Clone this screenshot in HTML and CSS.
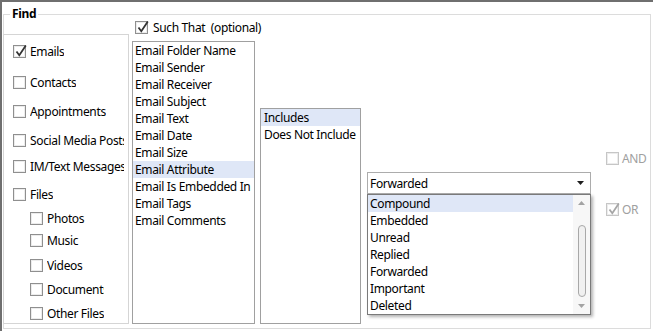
FILE: index.html
```html
<!DOCTYPE html>
<html lang="en">
<head>
    <meta charset="UTF-8">
    <title>Find</title>
    <link rel="stylesheet" href="styles.css">
</head>
<body>
    <div class="window">
        <div class="group">
            <span class="group-title">Find</span>
            <div class="find-row">
                <div class="types">
                    <label class="type"><span class="cb"><svg viewBox="0 0 13 13"><path d="M2.5 6.5 L5.3 10.3 L11.8 0.5"/></svg></span><span class="type-name">Emails</span></label>
                    <label class="type"><span class="cb"></span><span class="type-name">Contacts</span></label>
                    <label class="type"><span class="cb"></span><span class="type-name">Appointments</span></label>
                    <label class="type"><span class="cb"></span><span class="type-name">Social Media Posts</span></label>
                    <label class="type"><span class="cb"></span><span class="type-name">IM/Text Messages</span></label>
                    <label class="type"><span class="cb"></span><span class="type-name">Files</span></label>
                    <label class="type sub"><span class="cb"></span><span class="type-name">Photos</span></label>
                    <label class="type sub"><span class="cb"></span><span class="type-name">Music</span></label>
                    <label class="type sub"><span class="cb"></span><span class="type-name">Videos</span></label>
                    <label class="type sub"><span class="cb"></span><span class="type-name">Documents</span></label>
                    <label class="type sub"><span class="cb"></span><span class="type-name">Other Files</span></label>
                </div>

                <div class="attr-col">
                    <label class="such-that"><span class="cb"><svg viewBox="0 0 13 13"><path d="M2.5 6.5 L5.3 10.3 L11.8 0.5"/></svg></span>Such That&nbsp; (optional)</label>
                    <ul class="list attr-list">
                        <li>Email Folder Name</li>
                        <li>Email Sender</li>
                        <li>Email Receiver</li>
                        <li>Email Subject</li>
                        <li>Email Text</li>
                        <li>Email Date</li>
                        <li>Email Size</li>
                        <li class="selected">Email Attribute</li>
                        <li>Email Is Embedded In</li>
                        <li>Email Tags</li>
                        <li>Email Comments</li>
                    </ul>
                </div>

                <ul class="list op-list">
                    <li class="selected">Includes</li>
                    <li>Does Not Include</li>
                </ul>

                <div class="value-col">
                    <div class="combo">
                        <span>Forwarded</span>
                        <svg class="combo-arrow" viewBox="0 0 7 4"><path d="M0 0 H7 L3.5 4 Z"/></svg>
                        <div class="dropdown">
                            <ul class="options">
                                <li class="selected">Compound</li>
                                <li>Embedded</li>
                                <li>Unread</li>
                                <li>Replied</li>
                                <li>Forwarded</li>
                                <li>Important</li>
                                <li>Deleted</li>
                            </ul>
                            <div class="scrollbar">
                                <svg class="scroll-arrow" viewBox="0 0 7 4"><path d="M0 4 H7 L3.5 0 Z"/></svg>
                                <div class="thumb"></div>
                                <svg class="scroll-arrow" viewBox="0 0 7 4"><path d="M0 0 H7 L3.5 4 Z"/></svg>
                            </div>
                        </div>
                    </div>
                </div>

                <div class="logic-col">
                    <label class="logic"><span class="cb"></span>AND</label>
                    <label class="logic or"><span class="cb"><svg viewBox="0 0 13 13"><path d="M2.5 6.5 L5.3 10.3 L11.8 0.5"/></svg></span>OR</label>
                </div>
            </div>
        </div>
    </div>
</body>
</html>
```

FILE: styles.css
```css
body { margin: 0; font-family: "Noto Sans", "Open Sans", sans-serif; font-size: 12px; letter-spacing: -0.35px; color: #000; background: #fff; }
.window {
    width: 653px;
    height: 331px;
    box-sizing: border-box;
    border-top: 2px solid #6f6f6f;
    border-left: 2px solid #6f6f6f;
    padding: 12px 0 0 1px;
    overflow: hidden;
}
.group {
    position: relative;
    width: 648px;
    height: 315px;
    box-sizing: border-box;
    border: 1px solid #dcdcdc;
}
.group-title {
    position: absolute;
    top: -8px;
    left: 6px;
    padding: 0 2px;
    background: #fff;
    font-weight: bold;
    line-height: 14px;
}
.find-row {
    display: flex;
    align-items: flex-end;
    height: 100%;
    box-sizing: border-box;
    padding-bottom: 4px;
}

/* checkboxes */
.cb {
    flex: none;
    position: relative;
    width: 13px;
    height: 13px;
    box-sizing: border-box;
    border: 1px solid #8f8f8f;
    background: #fff;
    box-shadow: inset 0 0 0 1px #ececec;
    margin-right: 4px;
}
.cb svg { position: absolute; left: 0; top: -1px; width: 13px; height: 13px; overflow: visible; }
.cb path { fill: none; stroke: #333; stroke-width: 1.8; }

/* left panel */
.types {
    margin-left: -1px;
    width: 126px;
    height: 290px;
    box-sizing: border-box;
    border: 1px solid #d5d5d5;
    padding: 9px 0 0 9px;
    display: grid;
    grid-template-rows: 31px 29px 29px 26px 28px 24px 22px 25px 24px 24px auto;
    overflow: hidden;
}
.type { display: flex; align-items: center; height: 15px; white-space: nowrap; }
.type-name { max-width: 94px; overflow: hidden; }
.type.sub { padding-left: 17px; }
.type.sub .type-name { width: 57px; }

/* lists */
.attr-col { align-self: stretch; display: flex; flex-direction: column; margin-left: 3px; width: 123px; }
.such-that { display: flex; align-items: center; margin: 6px 0 0 3px; height: 13px; white-space: nowrap; }
.such-that .cb { margin-right: 5px; }
.list { list-style: none; margin: 0; padding: 0; border: 1px solid #a0a0a0; box-sizing: border-box; background: #fff; }
.list li { height: 17px; line-height: 17px; padding-left: 2px; white-space: nowrap; overflow: hidden; }
.list li.selected, .options li.selected { background: #dfe7f7; }
.attr-list { margin-top: auto; width: 123px; height: 283px; }
.op-list { margin-left: 5px; width: 101px; height: 216px; }
.op-list li { padding-left: 3px; }

/* combo */
.value-col { align-self: flex-start; margin: 157px 0 0 6px; width: 224px; }
.combo {
    position: relative;
    display: flex;
    align-items: center;
    height: 22px;
    box-sizing: border-box;
    border: 1px solid #acacac;
    padding-left: 2px;
}
.combo-arrow { margin-left: auto; margin-right: 6px; width: 7px; height: 4px; }
.combo-arrow path { fill: #1e1e1e; }
.dropdown {
    position: absolute;
    left: -1px;
    top: 21px;
    width: 224px;
    box-sizing: border-box;
    display: flex;
    border: 1px solid #7a7a7a;
    background: #fff;
    box-shadow: 2px 2px 3px rgba(0, 0, 0, 0.3);
}
.options { flex: 1; list-style: none; margin: 0; padding: 0; }
.options li { height: 17px; line-height: 17px; padding-left: 2px; }
.scrollbar {
    width: 17px;
    display: flex;
    flex-direction: column;
    align-items: center;
    background: #f7f7f7;
}
.scroll-arrow { width: 7px; height: 4px; margin: 6px 0; }
.scroll-arrow path { fill: #a3a3a3; }
.thumb {
    width: 8px;
    height: 72px;
    box-sizing: border-box;
    margin: 14px 0 auto;
    border: 1px solid #a8a8a8;
    border-radius: 4px;
    background: #f0f0f0;
}

/* and / or */
.logic-col { align-self: flex-start; margin: 137px 0 0 15px; display: flex; flex-direction: column; }
.logic { display: flex; align-items: center; height: 13px; color: #a0a0a0; white-space: nowrap; }
.logic .cb { border-color: #c6c6c6; margin-right: 3px; }
.logic .cb path { stroke: #a6a6a6; }
.logic.or { margin-top: 38px; }
```
